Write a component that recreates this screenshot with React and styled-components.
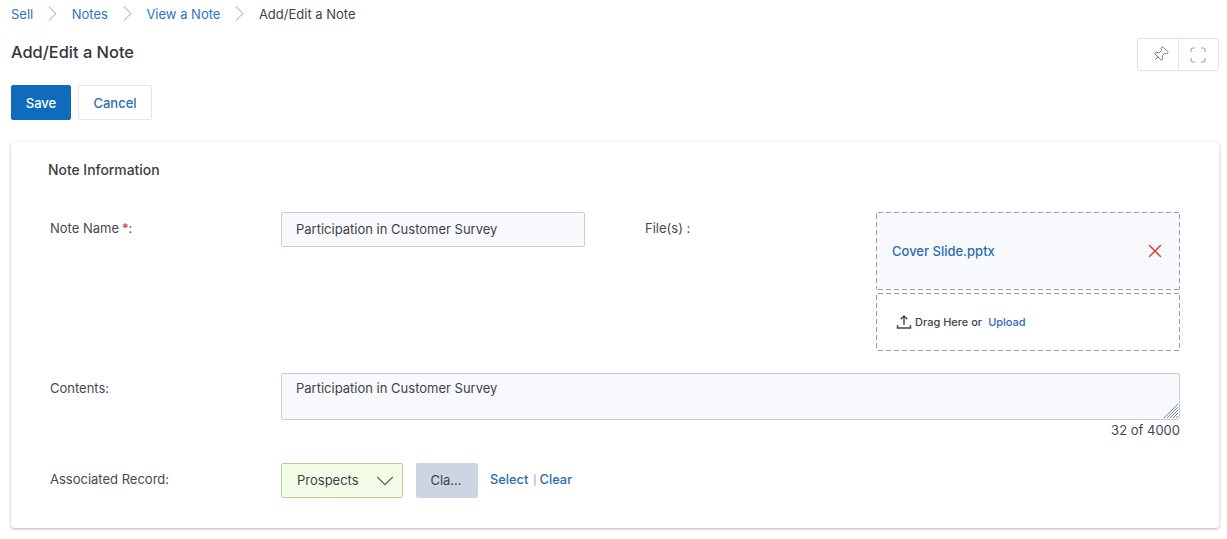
import React from "react";
import styled, { createGlobalStyle } from "styled-components";
import { ChevronRight, ChevronDown, Pin, X } from "lucide-react";

const Global = createGlobalStyle`
  html, body { margin: 0; padding: 0; background: #fff; }
  body { font-family: Inter, "Liberation Sans", sans-serif; color: #3a3f45; }
  * { box-sizing: border-box; }
`;

const Page = styled.div`
  width: 1227px;
  height: 539px;
  padding: 0 8px 0 11px;
  overflow: hidden;
`;
const Crumbs = styled.nav`
  display: flex;
  align-items: center;
  height: 27px;
  font-size: 13px;
`;
const Crumb = styled.a`
  color: ${(p) => (p.$current ? "#3f4347" : "#2a74c8")};
`;
const CrumbSep = styled.span`
  display: flex;
  width: 38.5px;
  justify-content: center;
  color: #a9aeb4;
`;
const Header = styled.div`
  display: flex;
  align-items: center;
  justify-content: space-between;
  height: 36px;
  margin-top: 7px;
`;
const Title = styled.h1`
  margin: 0;
  font-size: 16.4px;
  font-weight: 500;
  color: #33373b;
  line-height: 36px;
`;
const IconGroup = styled.div`
  display: flex;
  width: 82px;
  height: 33px;
  margin-top: 5px;
  border: 1px solid #dfe5ec;
  border-radius: 3px;
  box-shadow: 0 0 1px rgba(150, 170, 190, 0.5);
`;
const IconCell = styled.span`
  flex: 1;
  display: flex;
  align-items: center;
  justify-content: center;
  color: #74797f;
  & + & { border-left: 1px solid #dfe5ec; }
`;
const PinIcon = styled(Pin)`
  margin: -1px 0 0 5px;
  transform: rotate(45deg);
`;
const Actions = styled.div`
  display: flex;
  gap: 7px;
  margin-top: 15px;
`;
const Button = styled.button`
  height: 35px;
  width: ${(p) => (p.$primary ? "60px" : "74px")};
  padding: 0;
  font: 500 13px Inter, sans-serif;
  border-radius: 2px;
  border: ${(p) => (p.$primary ? "1px solid #0f6cbd" : "1.5px solid #e2e7ee")};
  background: ${(p) => (p.$primary ? "#0f6cbd" : "#fff")};
  color: ${(p) => (p.$primary ? "#fff" : "#2b6cb0")};
`;
const Card = styled.section`
  height: 386px;
  margin-top: 22px;
  padding: 20px 37px 0 37px;
  border-radius: 4px;
  background: #fff;
  box-shadow: 0 1px 3px rgba(60, 70, 80, 0.42);
`;
const SectionTitle = styled.h2`
  margin: 0;
  font-size: 13.9px;
  font-weight: 500;
  line-height: 16px;
  color: #3a3e42;
`;
const Row = styled.div`
  display: flex;
  align-items: flex-start;
  margin-top: ${(p) => p.$top}px;
  margin-left: 2px;
`;
const Label = styled.label`
  flex: none;
  width: 231px;
  padding-top: ${(p) => p.$pad ?? 8}px;
  font-size: 13px;
  line-height: 16px;
  color: #45494e;
`;
const Req = styled.span`
  margin-left: 3px;
  color: #c0392b;
`;
const FieldBase = `
  display: block;
  font: 13px Inter, sans-serif;
  color: #3f4347;
  background: #f7f9fc;
  border: 1px solid #c4cedb;
  border-radius: 2px;
  outline: none;
`;
const TextInput = styled.input`
  ${FieldBase}
  flex: none;
  width: 304px;
  height: 35px;
  padding: 0 14px 2px;
`;
const Gap = styled.div`
  flex: none;
  width: 60px;
`;
const FileStack = styled.div`
  flex: none;
  width: 304px;
  display: flex;
  flex-direction: column;
  gap: 3px;
`;
const DropBox = styled.div`
  display: flex;
  align-items: center;
  height: ${(p) => p.$h}px;
  padding: 0 ${(p) => p.$pr}px 0 ${(p) => p.$pl}px;
  border-radius: 2px;
  background-color: ${(p) => p.$bg};
  background-image:
    linear-gradient(90deg, #8fa0b5 5px, transparent 0),
    linear-gradient(90deg, #8fa0b5 5px, transparent 0),
    linear-gradient(180deg, #8fa0b5 5px, transparent 0),
    linear-gradient(180deg, #8fa0b5 5px, transparent 0);
  background-size: 8px 1px, 8px 1px, 1px 8px, 1px 8px;
  background-position: 2px 0, 2px 100%, 0 2px, 100% 2px;
  background-repeat: repeat-x, repeat-x, repeat-y, repeat-y;
`;
const FileLink = styled.a`
  flex: 1;
  font-size: 13px;
  font-weight: 500;
  color: #2b6cb0;
`;
const DropText = styled.span`
  margin-left: 3px;
  font-size: 11px;
  font-weight: 500;
  color: #3f4347;
`;
const UploadLink = styled.a`
  margin-left: 6px;
  font-size: 11px;
  font-weight: 500;
  color: #2b6cb0;
`;
const AreaWrap = styled.div`
  position: relative;
  flex: none;
  width: 899px;
  height: 47px;
`;
const Area = styled.textarea`
  ${FieldBase}
  width: 100%;
  height: 100%;
  padding: 5px 14px;
  line-height: 18px;
  resize: none;
`;
const Grip = styled.svg`
  position: absolute;
  right: 1px;
  bottom: 1px;
`;
const Counter = styled.div`
  margin-top: 2px;
  padding-right: 2px;
  text-align: right;
  font-size: 13px;
  line-height: 16px;
  color: #45494e;
`;
const Select = styled.div`
  flex: none;
  display: flex;
  align-items: center;
  justify-content: space-between;
  width: 122px;
  height: 35px;
  padding: 0 2px 2px 15px;
  font-size: 13px;
  color: #3f4347;
  background: #f3fce7;
  border: 1px solid #abd79a;
  border-radius: 2px;
  & svg { color: #5c6268; margin-top: 2px; }
`;
const ClassBtn = styled.button`
  flex: none;
  width: 62px;
  height: 35px;
  margin-left: 13px;
  padding: 0 2px 2px 0;
  font: 13px Inter, sans-serif;
  color: #3f4347;
  background: #ccd5e1;
  border: none;
  border-radius: 2px;
`;
const LinkRow = styled.div`
  display: flex;
  align-items: center;
  height: 33px;
  margin-left: 12px;
  font-size: 12.8px;
  font-weight: 500;
  color: #2b6cb0;
`;
const Pipe = styled.span`
  margin: 0 3px 0 5px;
  font-size: 10px;
  font-weight: 400;
  color: #8a9099;
`;

const Sep = () => (
  <CrumbSep>
    <ChevronRight size={27} strokeWidth={0.9} />
  </CrumbSep>
);

const UploadIcon = () => (
  <svg width="16" height="16" viewBox="0 0 16 16" fill="none" stroke="#3b4754" strokeWidth="1.4">
    <path d="M8 11V2M4.8 5.2 8 2l3.2 3.2M1.5 11v3h13v-3" />
  </svg>
);

const ExpandIcon = () => (
  <svg width="16" height="16" viewBox="0 0 16 16" fill="none" stroke="#a3a9af" strokeWidth="1.2" strokeLinecap="round">
    <path d="M1 4.5V3a2 2 0 0 1 2-2h1.5M11.5 1H13a2 2 0 0 1 2 2v1.5M15 11.5V13a2 2 0 0 1-2 2h-1.5M4.5 15H3a2 2 0 0 1-2-2v-1.5" />
  </svg>
);

export default function App() {
  return (
    <Page>
      <Global />
      <Crumbs>
        <Crumb>Sell</Crumb>
        <Sep />
        <Crumb>Notes</Crumb>
        <Sep />
        <Crumb>View a Note</Crumb>
        <Sep />
        <Crumb $current>Add/Edit a Note</Crumb>
      </Crumbs>
      <Header>
        <Title>Add/Edit a Note</Title>
        <IconGroup>
          <IconCell>
            <PinIcon size={17} strokeWidth={1.3} />
          </IconCell>
          <IconCell>
            <ExpandIcon />
          </IconCell>
        </IconGroup>
      </Header>
      <Actions>
        <Button $primary>Save</Button>
        <Button>Cancel</Button>
      </Actions>
      <Card>
        <SectionTitle>Note Information</SectionTitle>
        <Row $top={34}>
          <Label>
            Note Name<Req>*</Req>:
          </Label>
          <TextInput readOnly value="Participation in Customer Survey" />
          <Gap />
          <Label>File(s) :</Label>
          <FileStack>
            <DropBox $h={78} $pl={16} $pr={14} $bg="#f7f9fc">
              <FileLink>Cover Slide.pptx</FileLink>
              <X size={22} strokeWidth={1.6} color="#e03b3b" />
            </DropBox>
            <DropBox $h={58} $pl={20} $pr={15} $bg="#fff">
              <UploadIcon />
              <DropText>Drag Here or</DropText>
              <UploadLink>Upload</UploadLink>
            </DropBox>
          </FileStack>
        </Row>
        <Row $top={22}>
          <Label $pad={7}>Contents:</Label>
          <AreaWrap>
            <Area readOnly value="Participation in Customer Survey" />
            <Grip width="16" height="16" viewBox="0 0 16 16" stroke="#7d838a" strokeWidth="1">
              <path d="M1 15 15 1M4 15 15 4M7 15l8-8M10 15l5-5M13 15l2-2" />
            </Grip>
          </AreaWrap>
        </Row>
        <Counter>32 of 4000</Counter>
        <Row $top={25}>
          <Label>Associated Record:</Label>
          <Select>
            Prospects
            <ChevronDown size={30} strokeWidth={0.85} />
          </Select>
          <ClassBtn>Cla...</ClassBtn>
          <LinkRow>
            Select<Pipe>|</Pipe>Clear
          </LinkRow>
        </Row>
      </Card>
    </Page>
  );
}
